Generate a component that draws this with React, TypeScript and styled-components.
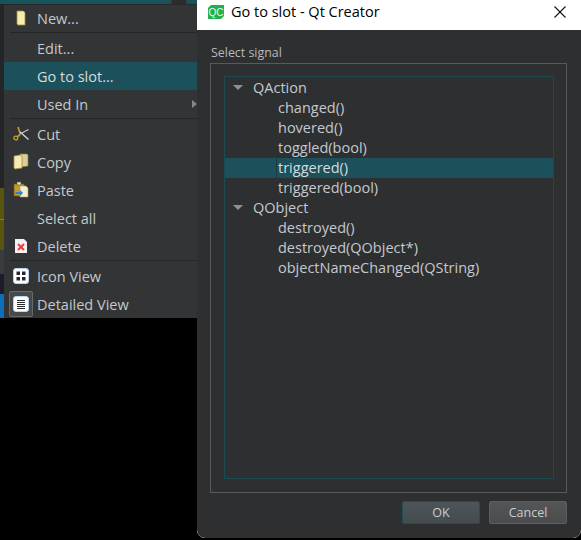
import styled, { createGlobalStyle } from "styled-components";

const GlobalStyle = createGlobalStyle`
  html, body {
    margin: 0;
    background: #000;
  }
  body {
    font-family: 'Open Sans', 'Noto Sans', 'Liberation Sans', sans-serif;
  }
`;

const Screen = styled.div`
  width: 581px;
  height: 540px;
  display: flex;
  align-items: flex-start;
  overflow: hidden;
  background: #000;
`;

const Backdrop = styled.div`
  width: 197px;
  height: 318px;
  flex: none;
  box-sizing: border-box;
  padding: 4px 0 0 4px;
  background:
    linear-gradient(
        to right,
        #17535b 0 170px,
        #3a3c3e 170px 172px,
        #2b2c2e 172px 186px,
        #3a3c3e 186px 187px,
        #17535b 187px
      )
      top / 100% 4px no-repeat,
    linear-gradient(
        to bottom,
        #242527 0 188px,
        #56560f 188px 219px,
        #7a7a50 219px 220px,
        #56560f 220px 250px,
        #3a3b3d 250px 274px,
        #1c1c2a 274px 294px,
        #0b6fbd 294px
      )
      left / 4px 100% no-repeat;
`;

const Menu = styled.div`
  height: 314px;
  background: #333436;
  box-shadow: inset 0 1px 0 #27282a;
  color: #c3c9ce;
  font-size: 14.5px;
`;

const MenuItem = styled.div<{ $active?: boolean }>`
  height: 28px;
  display: flex;
  align-items: center;
  padding-left: 5px;
  position: relative;
  background: ${({ $active }) => ($active ? "#1c515b" : "transparent")};
  color: ${({ $active }) => ($active ? "#d6dcdf" : "#c3c9ce")};
`;

const MenuIcon = styled.span<{ $checked?: boolean }>`
  width: 24px;
  height: 26px;
  flex: none;
  box-sizing: border-box;
  margin-right: 4px;
  display: flex;
  align-items: center;
  justify-content: center;
  border-radius: 2px;
  border: 1px solid ${({ $checked }) => ($checked ? "#66686a" : "transparent")};
  background: ${({ $checked }) => ($checked ? "#47494b" : "transparent")};
`;

const MenuSeparator = styled.div`
  height: 2px;
  margin-left: 6px;
  border-top: 1px solid #242527;
  box-sizing: border-box;
`;

const SubmenuArrow = styled.span`
  position: absolute;
  right: 0;
  top: 10px;
  width: 0;
  height: 0;
  border-left: 5px solid #85888b;
  border-top: 4px solid transparent;
  border-bottom: 4px solid transparent;
`;

const Dialog = styled.div`
  flex: 1;
  height: 538px;
  display: flex;
  flex-direction: column;
  background: #fff;
  border-radius: 0 0 8px 8px;
  overflow: hidden;
`;

const TitleBar = styled.div`
  height: 30px;
  flex: none;
  display: flex;
  align-items: center;
  padding: 0 15px 7px 11px;
  box-sizing: border-box;
  background: #fff;
  color: #000;
  font-size: 14.5px;
`;

const TitleText = styled.span`
  flex: 1;
  margin-left: 7px;
`;

const DialogBody = styled.div`
  flex: 1;
  min-height: 0;
  display: flex;
  flex-direction: column;
  box-sizing: border-box;
  padding: 15px 14px 14px 13px;
  background: #2e2f31;
  border-radius: 0 0 8px 8px;
  color: #c3c9ce;
`;

const GroupLabel = styled.div`
  height: 16px;
  line-height: 16px;
  margin: 0 0 2px 1px;
  font-size: 12.4px;
  color: #b6b9bb;
`;

const GroupBox = styled.div`
  flex: 1;
  min-height: 0;
  display: flex;
  box-sizing: border-box;
  padding: 12px 12px 13px 13px;
  border: 1px solid #585a5c;
`;

const Tree = styled.div`
  flex: 1;
  box-sizing: border-box;
  padding-top: 1px;
  border: 1px solid #1c4a52;
  font-size: 14.5px;
`;

const TreeRow = styled.div<{ $selected?: boolean; $child?: boolean }>`
  height: 20px;
  display: flex;
  align-items: stretch;
  line-height: 20px;
  padding-left: ${({ $child }) => ($child ? "51px" : "8px")};
  background: ${({ $selected }) => ($selected ? "#1c515b" : "transparent")};
`;

const TreeLabel = styled.span<{ $selected?: boolean }>`
  padding-left: 2px;
  box-shadow: ${({ $selected }) => ($selected ? "inset 1px 0 0 #1f3a40" : "none")};
  color: ${({ $selected }) => ($selected ? "#d6dcdf" : "#c3c9ce")};
`;

const TreeArrow = styled.span`
  width: 0;
  height: 0;
  align-self: center;
  margin: 0 8px 2px 0;
  border-top: 5px solid #8d8f91;
  border-left: 5px solid transparent;
  border-right: 5px solid transparent;
`;

const ButtonRow = styled.div`
  flex: none;
  display: flex;
  justify-content: flex-end;
  gap: 9px;
  margin-top: 8px;
`;

const Button = styled.button<{ $primary?: boolean }>`
  width: 78px;
  height: 23px;
  padding: 0;
  font-family: inherit;
  font-size: 12.5px;
  color: #c8cdd1;
  border-radius: 2px;
  border: 1px solid ${({ $primary }) => ($primary ? "#1f4f58" : "#5c5e60")};
  background: ${({ $primary }) =>
    $primary
      ? "linear-gradient(to bottom, #4d5559, #454c50)"
      : "linear-gradient(to bottom, #545658, #4a4b4d)"};
`;

const NewIcon = () => (
  <svg width="16" height="16" viewBox="0 0 16 16">
    <path d="M4 1h6l2 2v12H5L4 14z" fill="#f6eeae" stroke="#a68a3c" strokeWidth="0.8" />
    <path d="M9.5 1.5h2v2z" fill="#dfe7f2" />
  </svg>
);

const CutIcon = () => (
  <svg width="16" height="16" viewBox="0 0 16 16" fill="none">
    <path d="M6 8.5 15.5 3.5" stroke="#c2c4c6" strokeWidth="1.3" />
    <path d="M6.5 5.5 15.5 13.5" stroke="#d8dadc" strokeWidth="1.3" />
    <path d="M7 7 5 1" stroke="#cf9f24" strokeWidth="1.6" />
    <path d="M7 9 4.5 10.5" stroke="#cf9f24" strokeWidth="1.6" />
    <circle cx="2.8" cy="12" r="1.9" stroke="#cf9f24" strokeWidth="1.3" />
  </svg>
);

const CopyIcon = () => (
  <svg width="16" height="18" viewBox="0 0 16 18">
    <path d="M7 1h7l1 1v11l-7 1z" fill="#d9cf9c" stroke="#8b7a42" strokeWidth="0.7" />
    <path d="M1 3l6-1 2 2v11l-7 1-1-1z" fill="#f5eab0" stroke="#a68a3c" strokeWidth="0.8" />
  </svg>
);

const PasteIcon = () => (
  <svg width="16" height="18" viewBox="0 0 16 18">
    <path d="M1 3h10v12H1z" fill="#c49a2a" stroke="#6d5518" strokeWidth="0.7" />
    <path d="M4 1h4v3H4z" fill="#e7e2c6" stroke="#6d5518" strokeWidth="0.6" />
    <path d="M7 5h6l2 2v9H7z" fill="#f3eed2" stroke="#a89a68" strokeWidth="0.6" />
    <path d="M2 11h5v-2l3 3-3 3v-2H3z" fill="#2f82d0" />
  </svg>
);

const DeleteIcon = () => (
  <svg width="16" height="16" viewBox="0 0 16 16">
    <path d="M2 1h9l3 3v11H2z" fill="#f2f2f2" />
    <path d="M5 6l6 6M11 6l-6 6" stroke="#ee3c3c" strokeWidth="2" />
  </svg>
);

const ViewTile = styled.svg`
  display: block;
`;

const IconViewIcon = () => (
  <ViewTile width="16" height="16" viewBox="0 0 16 16">
    <rect x="0.5" y="0.5" width="15" height="15" rx="2.5" fill="#fff" stroke="#b9d4f0" />
    <rect x="3.5" y="3.5" width="3.5" height="3.5" fill="#26282a" />
    <rect x="9" y="3.5" width="3.5" height="3.5" fill="#26282a" />
    <rect x="3.5" y="9" width="3.5" height="3.5" fill="#26282a" />
    <rect x="9" y="9" width="3.5" height="3.5" fill="#26282a" />
  </ViewTile>
);

const DetailViewIcon = () => (
  <ViewTile width="16" height="16" viewBox="0 0 16 16">
    <rect x="0.5" y="0.5" width="15" height="15" rx="2.5" fill="#fff" stroke="#b9d4f0" />
    <path d="M4 4.5h8M4 6.5h8M4 8.5h8M4 10.5h8M4 12.5h8" stroke="#2a2c2e" strokeWidth="1" />
  </ViewTile>
);

const QtIcon = () => (
  <svg width="16" height="16" viewBox="0 0 16 16">
    <path d="M3 1h13v11l-3 3H0V4z" fill="#22b14c" />
    <text x="8" y="11.5" textAnchor="middle" fontSize="10" fontFamily="Liberation Sans, sans-serif" fill="#e8f8ec">
      QC
    </text>
  </svg>
);

const CloseIcon = () => (
  <svg width="12" height="12" viewBox="0 0 12 12">
    <path d="M0.5 0.5l11 11M11.5 0.5l-11 11" stroke="#111" strokeWidth="1.1" />
  </svg>
);

function App() {
  return (
    <Screen>
      <GlobalStyle />
      <Backdrop>
        <Menu>
          <MenuItem>
            <MenuIcon>
              <NewIcon />
            </MenuIcon>
            New...
          </MenuItem>
          <MenuSeparator />
          <MenuItem>
            <MenuIcon />
            Edit...
          </MenuItem>
          <MenuItem $active>
            <MenuIcon />
            Go to slot...
          </MenuItem>
          <MenuItem>
            <MenuIcon />
            Used In
            <SubmenuArrow />
          </MenuItem>
          <MenuSeparator />
          <MenuItem>
            <MenuIcon>
              <CutIcon />
            </MenuIcon>
            Cut
          </MenuItem>
          <MenuItem>
            <MenuIcon>
              <CopyIcon />
            </MenuIcon>
            Copy
          </MenuItem>
          <MenuItem>
            <MenuIcon>
              <PasteIcon />
            </MenuIcon>
            Paste
          </MenuItem>
          <MenuItem>
            <MenuIcon />
            Select all
          </MenuItem>
          <MenuItem>
            <MenuIcon>
              <DeleteIcon />
            </MenuIcon>
            Delete
          </MenuItem>
          <MenuSeparator />
          <MenuItem>
            <MenuIcon>
              <IconViewIcon />
            </MenuIcon>
            Icon View
          </MenuItem>
          <MenuItem>
            <MenuIcon $checked>
              <DetailViewIcon />
            </MenuIcon>
            Detailed View
          </MenuItem>
        </Menu>
      </Backdrop>

      <Dialog>
        <TitleBar>
          <QtIcon />
          <TitleText>Go to slot - Qt Creator</TitleText>
          <CloseIcon />
        </TitleBar>
        <DialogBody>
          <GroupLabel>Select signal</GroupLabel>
          <GroupBox>
            <Tree>
              <TreeRow>
                <TreeArrow />
                <TreeLabel>QAction</TreeLabel>
              </TreeRow>
              <TreeRow $child>
                <TreeLabel>changed()</TreeLabel>
              </TreeRow>
              <TreeRow $child>
                <TreeLabel>hovered()</TreeLabel>
              </TreeRow>
              <TreeRow $child>
                <TreeLabel>toggled(bool)</TreeLabel>
              </TreeRow>
              <TreeRow $child $selected>
                <TreeLabel $selected>triggered()</TreeLabel>
              </TreeRow>
              <TreeRow $child>
                <TreeLabel>triggered(bool)</TreeLabel>
              </TreeRow>
              <TreeRow>
                <TreeArrow />
                <TreeLabel>QObject</TreeLabel>
              </TreeRow>
              <TreeRow $child>
                <TreeLabel>destroyed()</TreeLabel>
              </TreeRow>
              <TreeRow $child>
                <TreeLabel>destroyed(QObject*)</TreeLabel>
              </TreeRow>
              <TreeRow $child>
                <TreeLabel>objectNameChanged(QString)</TreeLabel>
              </TreeRow>
            </Tree>
          </GroupBox>
          <ButtonRow>
            <Button $primary>OK</Button>
            <Button>Cancel</Button>
          </ButtonRow>
        </DialogBody>
      </Dialog>
    </Screen>
  );
}

export default App;
